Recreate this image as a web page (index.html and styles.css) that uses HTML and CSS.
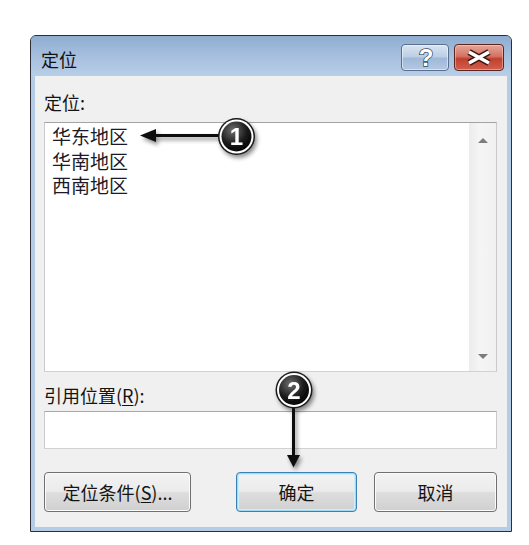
FILE: index.html
```html
<!DOCTYPE html>
<html>
<head>
	<meta charset="utf-8">
	<meta name="viewport" content="width=device-width, initial-scale=1">
	<title>定位</title>
	<link rel="stylesheet" href="styles.css">
</head>

<body>
	<div class="dialog">
		<div class="titlebar">
			<span class="title">定位</span>
			<div class="caption-btns">
				<span class="cap-btn help">
					<svg width="46" height="25" viewBox="0 0 46 25">
						<text x="24" y="20.5" text-anchor="middle" class="help-mark">?</text>
					</svg>
				</span>
				<span class="cap-btn close">
					<svg width="48" height="25" viewBox="0 0 48 25">
						<path d="M14 7 L34 18 M14 18 L34 7" stroke="#3a1410" stroke-width="6.5" fill="none"/>
						<path d="M14 7 L34 18 M14 18 L34 7" stroke="#fff" stroke-width="3.5" fill="none"/>
					</svg>
				</span>
			</div>
		</div>

		<div class="client">
			<p class="label">定位:</p>
			<div class="listbox">
				<ul class="items">
					<li>华东地区</li>
					<li>华南地区</li>
					<li>西南地区</li>
				</ul>
				<div class="scrollbar">
					<span class="arrow up"></span>
					<span class="arrow down"></span>
				</div>
			</div>
			<p class="label ref">引用位置(<u>R</u>):</p>
			<div class="field"></div>
			<div class="buttons">
				<button class="btn special">定位条件(<u>S</u>)...</button>
				<button class="btn ok">确定</button>
				<button class="btn cancel">取消</button>
			</div>
		</div>
	</div>

	<!-- 说明用的编号标注 -->
	<svg class="callouts" width="529" height="545" viewBox="0 0 529 545">
		<defs>
			<radialGradient id="ball" cx="38%" cy="30%" r="75%">
				<stop offset="0" stop-color="#6e6e6e"/>
				<stop offset="0.6" stop-color="#1c1c1c"/>
				<stop offset="1" stop-color="#000"/>
			</radialGradient>
			<filter id="shadow" x="-50%" y="-50%" width="200%" height="200%">
				<feDropShadow dx="2" dy="3" stdDeviation="2" flood-color="#000" flood-opacity="0.45"/>
			</filter>
		</defs>

		<g filter="url(#shadow)">
			<line x1="154" y1="135.5" x2="222" y2="135.5" stroke="#111" stroke-width="3"/>
			<polygon points="140,135.5 156,129 156,142" fill="#111"/>
			<circle cx="236.5" cy="136.5" r="18.5" fill="#1a1a1a"/>
			<circle cx="236.5" cy="136.5" r="17" fill="#fff"/>
			<circle cx="236.5" cy="136.5" r="15" fill="url(#ball)"/>
			<text x="236.5" y="145" class="num">1</text>
		</g>

		<g filter="url(#shadow)">
			<line x1="293.5" y1="404" x2="293.5" y2="457" stroke="#111" stroke-width="3"/>
			<polygon points="293.5,467.5 287,455 300,455" fill="#111"/>
			<circle cx="294" cy="390" r="18.5" fill="#1a1a1a"/>
			<circle cx="294" cy="390" r="17" fill="#fff"/>
			<circle cx="294" cy="390" r="15" fill="url(#ball)"/>
			<text x="294" y="398.5" class="num">2</text>
		</g>
	</svg>
</body>
</html>
```

FILE: styles.css
```css
body {
	margin: 0;
	background: #fff;
	font-family: "Noto Sans CJK SC", "Noto Sans", sans-serif;
	color: #141414;
}

/* 窗口外框 */
.dialog {
	width: 472px;
	margin: 35px 0 0 30px;
	padding: 0 4px 4px;
	border: 1px solid #2c3035;
	border-radius: 6px 6px 0 0;
	background: #b5cce7;
}
.titlebar {
	height: 40px;
	margin: 0 -4px;
	padding: 0 7px 0 10px;
	display: flex;
	align-items: flex-start;
	border-radius: 5px 5px 0 0;
	background: linear-gradient(#8fadd0, #a8c1df 55%, #b8cee8);
}
.title {
	margin-top: 12px;
	font-size: 18px;
	line-height: 22px;
	color: #111;
}
.caption-btns {
	margin-left: auto;
	margin-top: 8px;
	display: flex;
	gap: 5px;
}
.cap-btn {
	display: block;
	height: 25px;
	border-radius: 4px;
}
.cap-btn svg {
	display: block;
	overflow: visible;
}
.help {
	border: 1px solid #5a6f8e;
	background: linear-gradient(#d9e4f1, #bccee4 48%, #9fb8d8 52%, #b3c8e2);
	box-shadow: inset 0 0 0 1px rgba(255,255,255,0.5);
}
.help-mark {
	font-family: "Liberation Sans", sans-serif;
	font-weight: bold;
	font-size: 24px;
	fill: #fff;
	stroke: #33465f;
	stroke-width: 1.5px;
	paint-order: stroke;
}
.close {
	border: 1px solid #5c2620;
	background: linear-gradient(#e6a597, #d27465 45%, #c23f2e 55%, #d0604c);
	box-shadow: inset 0 0 0 1px rgba(255,220,210,0.45);
}

/* 窗口内容区 */
.client {
	padding: 15px 10px 15px 9px;
	background: #f0f0f0;
}
.label {
	margin: 0;
	font-size: 18px;
	line-height: 22px;
}
.label.ref { margin-top: 12px; }
u { text-underline-offset: 2px; }

.listbox {
	margin-top: 9px;
	height: 250px;
	box-sizing: border-box;
	display: flex;
	border: 1px solid;
	border-color: #a3a3a3 #cacaca #d2d2d2 #cacaca;
	background: #fff;
}
.items {
	flex: 1;
	margin: 0;
	padding: 1px 0 0 7px;
	list-style: none;
	font-size: 19px;
	line-height: 24.5px;
	color: #1a1a28;
}
.scrollbar {
	width: 27px;
	display: flex;
	flex-direction: column;
	justify-content: space-between;
	align-items: center;
	padding: 15px 0 12px;
	box-sizing: border-box;
	background: linear-gradient(to right, #ececec, #f5f5f5 40%, #f1f1f1);
}
.arrow {
	width: 0;
	height: 0;
	border-left: 5.5px solid transparent;
	border-right: 5.5px solid transparent;
}
.arrow.up { border-bottom: 5px solid #7c7c7c; }
.arrow.down { border-top: 5px solid #7c7c7c; }

.field {
	margin-top: 5px;
	height: 38px;
	box-sizing: border-box;
	border: 1px solid;
	border-color: #a8a8a8 #cacaca #d2d2d2 #cacaca;
	background: #fff;
}

.buttons {
	margin-top: 23px;
	display: flex;
}
.btn {
	height: 40px;
	padding: 0;
	font-family: inherit;
	font-size: 18px;
	color: #141414;
	border: 1px solid #707070;
	border-radius: 4px;
	background: linear-gradient(#f3f3f3, #ebebeb 48%, #dddddd 52%, #d0d0d0);
	box-shadow: inset 0 0 0 1px #fbfbfb;
}
.btn.special { width: 147px; }
.btn.ok {
	width: 121px;
	margin-left: 45px;
	border-color: #3c7fb1;
	box-shadow: inset 0 0 0 1px #9fdaf5, inset 0 0 0 2px #cdeefb;
}
.btn.cancel {
	width: 123px;
	margin-left: 17px;
}

/* 编号标注覆盖层 */
.callouts {
	position: absolute;
	top: 0;
	left: 0;
	pointer-events: none;
}
.num {
	font-family: "Liberation Sans", sans-serif;
	font-weight: bold;
	font-size: 24px;
	fill: #fff;
	text-anchor: middle;
}
```
